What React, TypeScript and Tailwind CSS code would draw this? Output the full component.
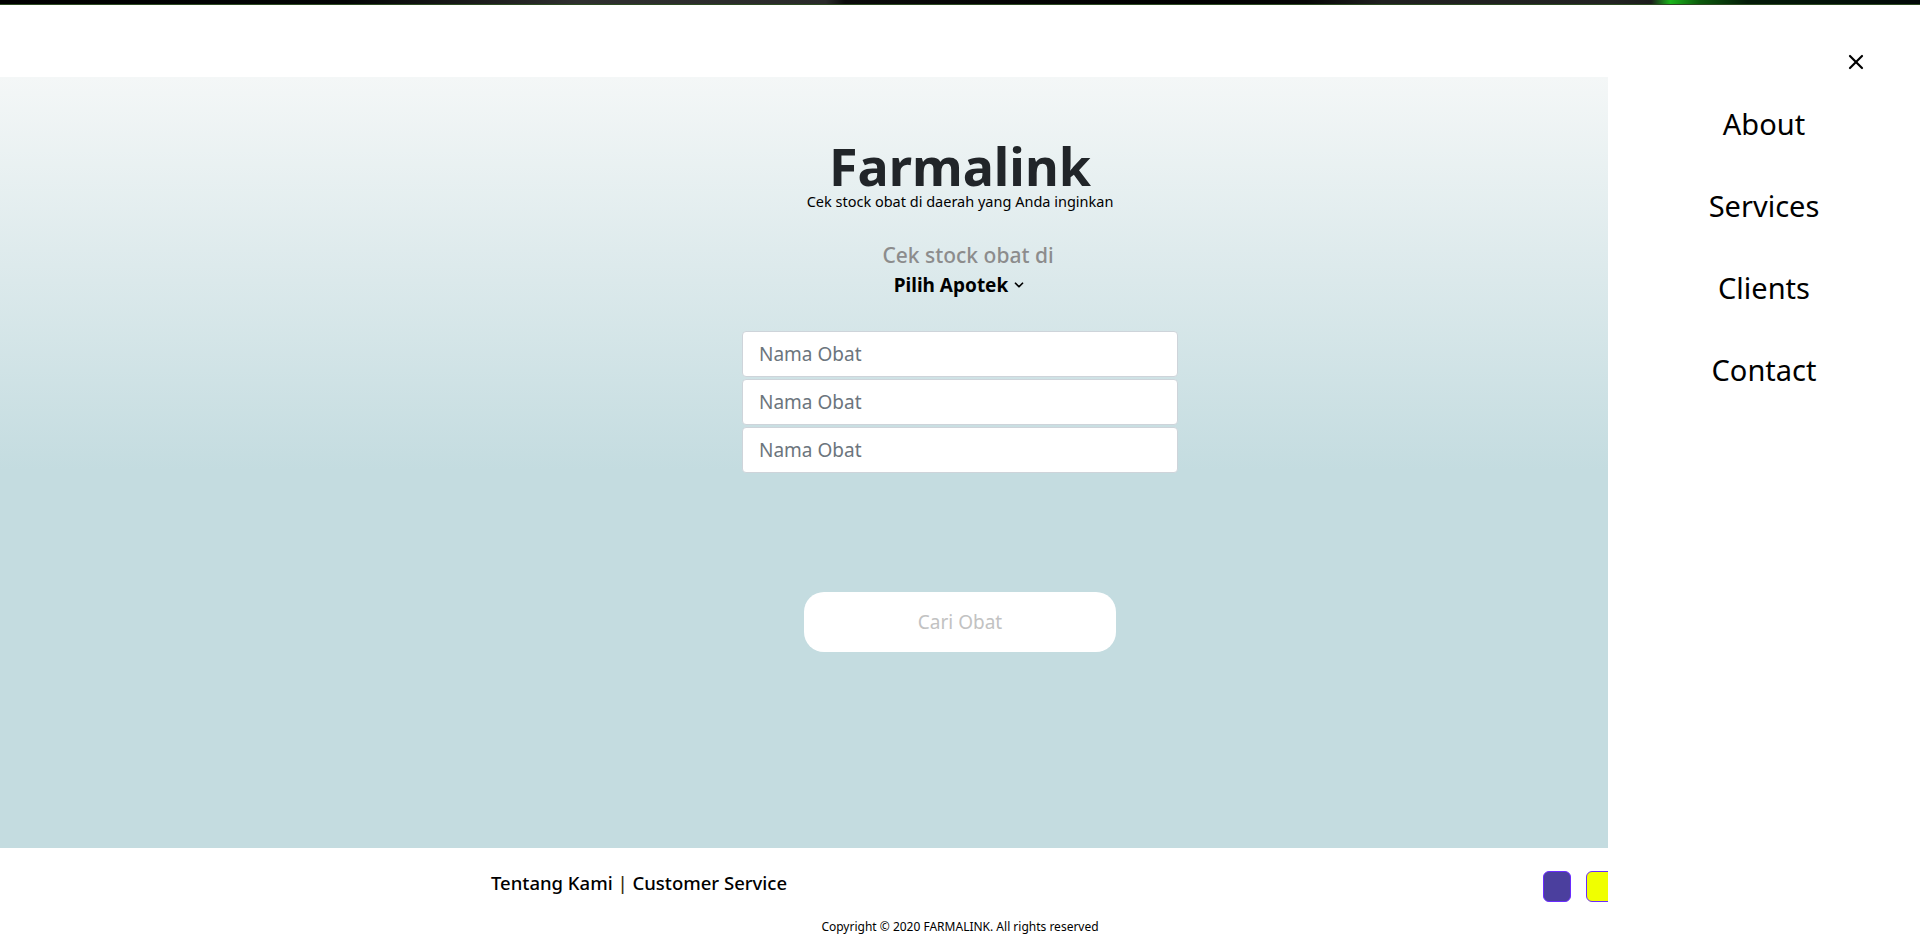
import { X, ChevronDown } from 'lucide-react';

const font = { fontFamily: '"Noto Sans", "Open Sans", Arial, sans-serif' };

function TopStrip() {
  return (
    <div className="h-[5px] w-full border-b border-[#2d4a22] bg-[linear-gradient(to_right,#000_0%,#030505_18%,#1c1c1c_25%,#2f2f2f_30%,#2a2a2a_43%,#0b0b0b_44%,#050505_52%,#000_62%,#060606_68%,#202020_72%,#222_84%,#1c1c1c_86%,#1ab51a_87%,#0c5a0c_88.5%,#031a08_91%,#020808_100%)]" />
  );
}

function SearchForm() {
  return (
    <div className="flex flex-col items-center pt-[62px]">
      <h1 className="text-[52px] font-bold leading-[54px] text-[#212529]">Farmalink</h1>
      <p className="text-[14.5px] leading-[16px] text-black">
        Cek stock obat di daerah yang Anda inginkan
      </p>

      <p className="mt-[34px] pl-[16px] text-[21px] font-medium leading-[24px] text-[#8c8c8c]">
        Cek stock obat di
      </p>
      <button className="mt-[6px] flex items-center gap-1 text-[19px] font-bold leading-[24px] text-black">
        <span>Pilih Apotek</span>
        <ChevronDown size={14} strokeWidth={3} />
      </button>

      <div className="mt-[34px] flex w-[436px] flex-col gap-[2px]">
        {[0, 1, 2].map((i) => (
          <input
            key={i}
            type="text"
            placeholder="Nama Obat"
            className="h-[46px] w-full rounded-[4px] border border-[#ced4da] bg-white px-4 text-[19px] text-[#495057] placeholder:text-[#6c757d] outline-none"
          />
        ))}
      </div>

      <button className="mt-[119px] h-[60px] w-[312px] rounded-[20px] bg-white text-[19px] text-[#c2c2c2]">
        Cari Obat
      </button>
    </div>
  );
}

function Footer() {
  return (
    <footer className="h-[97px] bg-white">
      <div className="flex items-center pt-[15px]">
        <div className="w-[1543px] pl-[491px] text-[18.5px] font-medium leading-[28px] text-black">
          Tentang Kami <span className="text-[#3a2a10]">|</span> Customer Service
        </div>
        <div className="mt-[8px] flex gap-[15px]">
          <div className="h-[31px] w-[28px] rounded-[6px] border border-[#6a2bff] bg-[#4b3f9e]" />
          <div className="h-[31px] w-[28px] rounded-[6px] border border-[#6a2bff] bg-[#f0ff00]" />
          <div className="h-[31px] w-[28px] rounded-[6px] border border-[#6a2bff] bg-[#2bbf6a]" />
        </div>
      </div>
      <p className="mt-[17px] text-center text-[12px] leading-[16px] text-black">
        Copyright © 2020 FARMALINK. All rights reserved
      </p>
    </footer>
  );
}

function SideMenu() {
  const links = ['About', 'Services', 'Clients', 'Contact'];
  return (
    <aside className="absolute bottom-0 right-0 top-[5px] z-10 w-[312px] bg-white">
      <div className="mt-[40px] flex h-[34px] items-center justify-end pr-[52px]">
        <button className="text-black">
          <X size={24} strokeWidth={2.2} />
        </button>
      </div>
      <nav className="mt-[25px] flex flex-col items-center gap-[42px]">
        {links.map((l) => (
          <a key={l} href="#" className="text-[29px] leading-[40px] text-black">
            {l}
          </a>
        ))}
      </nav>
    </aside>
  );
}

export default function App() {
  return (
    <div className="relative h-[945px] w-full overflow-hidden bg-white" style={font}>
      <TopStrip />
      <div className="h-[72px] bg-white" />
      <main className="h-[771px] bg-[linear-gradient(to_bottom,#f4f7f7_0%,#c4dce0_51%,#c4dce0_100%)]">
        <SearchForm />
      </main>
      <Footer />
      <SideMenu />
    </div>
  );
}
